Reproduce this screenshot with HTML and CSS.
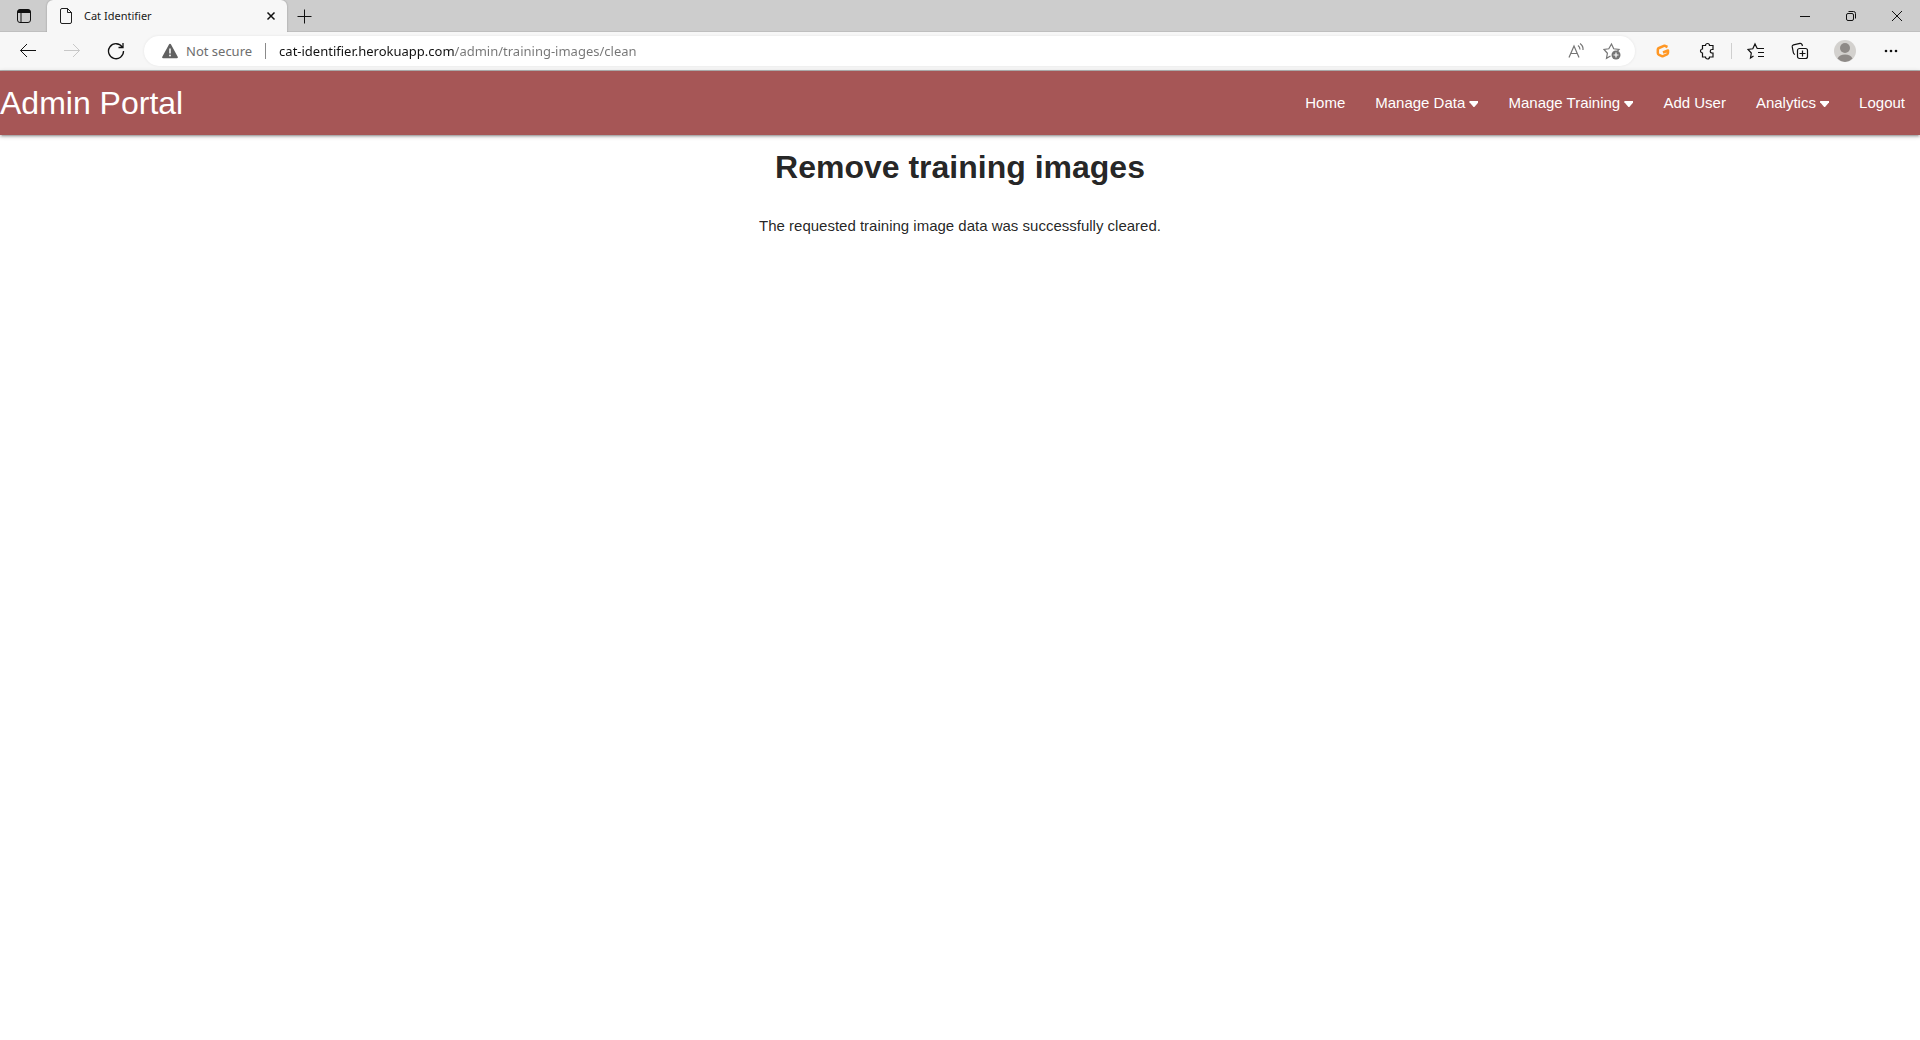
FILE: index.html
```html
<!DOCTYPE html>
<html lang="en">
<head>
<meta charset="utf-8">
<meta name="viewport" content="width=device-width, initial-scale=1">
<title>Cat Identifier</title>
<link rel="stylesheet" href="styles.css">
</head>
<body>
<div class="browser">
  <div class="tabstrip">
    <button class="tab-actions" aria-label="Tab actions">
      <svg width="16" height="16" viewBox="0 0 16 16"><rect x="1.5" y="1.5" width="13" height="13" rx="2.5" class="line"/><path d="M1.5 5V3.500a2 2 0 0 1 2-2h9a2 2 0 0 1 2 2V5z" class="solid"/><path d="M5 5v9.500" class="line"/></svg>
    </button>
    <div class="tab">
      <svg width="14" height="18" viewBox="0 0 14 18"><path d="M3 1.500h5.500l4 4V15a1.500 1.500 0 0 1-1.500 1.500H3A1.500 1.500 0 0 1 1.500 15V3A1.500 1.500 0 0 1 3 1.500zM8.500 1.500V5.500h4" class="line"/></svg>
      <span class="tab-title">Cat Identifier</span>
      <button class="tab-close" aria-label="Close tab"><svg width="10" height="10" viewBox="0 0 10 10"><path d="M1.500 1.500l7 7M8.500 1.500l-7 7" class="line bold"/></svg></button>
    </div>
    <button class="new-tab" aria-label="New tab"><svg width="16" height="16" viewBox="0 0 16 16"><path d="M8.500 1.500v14M1.500 8.500h14" class="line"/></svg></button>
    <div class="window-controls">
      <button class="window-button" aria-label="Minimize"><svg width="12" height="12" viewBox="0 0 12 12"><path d="M1 6.500h10" class="line"/></svg></button>
      <button class="window-button" aria-label="Restore"><svg width="12" height="12" viewBox="0 0 12 12"><rect x="1.500" y="3.500" width="7" height="7" rx="1.500" class="line"/><path d="M3.500 1.500h5a2 2 0 0 1 2 2v5" class="line"/></svg></button>
      <button class="window-button" aria-label="Close"><svg width="12" height="12" viewBox="0 0 12 12"><path d="M1 1l10 10M11 1L1 11" class="line"/></svg></button>
    </div>
  </div>
  <div class="toolbar">
    <button class="tool" aria-label="Back"><svg width="18" height="16" viewBox="0 0 18 16"><path d="M8 1L1.500 7.500 8 14M1.500 7.500H17" class="line"/></svg></button>
    <button class="tool" aria-label="Forward" disabled><svg width="18" height="16" viewBox="0 0 18 16"><path d="M10 1l6.500 6.500L10 14M16.500 7.500H1" class="line"/></svg></button>
    <button class="tool" aria-label="Refresh"><svg width="18" height="18" viewBox="0 0 18 18"><path d="M15.200 5A7.500 7.500 0 1 0 16.500 9M16 1v4.500h-4.500" class="line refresh"/></svg></button>
    <div class="address">
      <svg width="16" height="16" viewBox="0 0 16 16"><path d="M8 .8a1 1 0 0 1 .9.500l6.800 12.500a1 1 0 0 1-.9 1.400H1.200a1 1 0 0 1-.9-1.400L7.100 1.300A1 1 0 0 1 8 .8z" fill="#616161"/><path d="M8 5.500v5" stroke="#fff" stroke-width="1.500"/><circle cx="8" cy="12.500" r=".9" fill="#fff"/></svg>
      <label class="security" for="url">Not secure</label>
      <span class="divider"></span>
      <input class="url" id="url" type="text" value="cat-identifier.herokuapp.com/admin/training-images/clean" spellcheck="false">
      <button class="address-tool" aria-label="Read aloud"><svg width="18" height="18" viewBox="0 0 18 18"><path d="M2 15.500L7 4l5 11.500M3.700 11.500h6.600M11 3.500q2 1.500 2 4M13 1.500q3.500 2.500 3 6.500" class="line aloud"/></svg></button>
      <button class="address-tool" aria-label="Add to favorites"><svg width="18" height="18" viewBox="0 0 18 18"><path d="M7.500 14l-4 2.300.9-5L1 7.500l4.800-.7L8.500 2l2.200 4.800 5.300.7-1.500 1.500" class="line aloud"/><circle cx="13" cy="13" r="4.500" class="solid"/><path d="M10.500 13h5M13 10.500v5" stroke="#fff" stroke-width="1.200"/></svg></button>
    </div>
    <button class="tool" aria-label="Extension"><svg width="14" height="14" viewBox="0 0 14 14"><path d="M11.500 3L8.500 1.700 3 4Q1.800 4.500 1.800 5.500v3.500q0 1.300 1.200 1.800L6.500 12.300 11 10.300Q12 9.800 12 8.800V6.500L7 8.500" fill="none" stroke="#ff9724" stroke-width="2.500" stroke-linejoin="round"/></svg></button>
    <button class="tool" aria-label="Extensions"><svg width="18" height="18" viewBox="0 0 18 18"><path d="M4.500 3.500h3a2 2 0 0 1 4 0h3.500v4h-1a1.700 1.700 0 0 0 0 3.500h1v4h-3.500a2 2 0 0 1-4 0h-3v-4a2 2 0 0 1 0-4z" class="line aloud"/></svg></button>
    <span class="tool-divider"></span>
    <button class="tool" aria-label="Favorites"><svg width="18" height="18" viewBox="0 0 18 18"><path d="M6.500 14l-3 2 .8-5L1 7.500l4.800-.7L8 2l2.200 4.500M10 6.500h7M11 10.500h6M11 14.500h6" class="line aloud"/></svg></button>
    <button class="tool" aria-label="Collections"><svg width="18" height="18" viewBox="0 0 18 18"><path d="M4 12.500Q2.500 12 2.300 10.500L1.200 4.700Q1 3.200 2.500 2.800L9 1.300q1.500-.2 2 1.200l.5 1.500" class="line aloud"/><rect x="6.500" y="6.500" width="10" height="10" rx="2" class="line aloud"/><path d="M11.500 8.500v6M8.500 11.500h6" class="line aloud"/></svg></button>
    <button class="tool wide" aria-label="Profile"><svg width="22" height="22" viewBox="0 0 22 22"><circle cx="11" cy="11" r="11" fill="#d3d1ce"/><circle cx="11" cy="8" r="5" fill="#8e8a87"/><path d="M3.500 18.500q2-4 7.500-4t7.500 4A11 11 0 0 1 11 22a11 11 0 0 1-7.500-3.500z" fill="#8e8a87"/></svg></button>
    <button class="tool wide" aria-label="Settings and more"><svg width="14" height="4" viewBox="0 0 14 4"><circle cx="2" cy="2" r="1.300" class="solid"/><circle cx="7" cy="2" r="1.300" class="solid"/><circle cx="12" cy="2" r="1.300" class="solid"/></svg></button>
  </div>
</div>
<header class="navbar">
  <a class="brand" href="#">Admin Portal</a>
  <nav class="menu">
    <a class="menu-link" href="#">Home</a>
    <a class="menu-link" href="#">Manage Data <span class="caret"></span></a>
    <a class="menu-link" href="#">Manage Training <span class="caret"></span></a>
    <a class="menu-link" href="#">Add User</a>
    <a class="menu-link" href="#">Analytics <span class="caret"></span></a>
    <a class="menu-link" href="#">Logout</a>
  </nav>
</header>
<main class="content">
  <h1 class="title">Remove training images</h1>
  <p class="message">The requested training image data was successfully cleared.</p>
</main>
</body>
</html>
```
FILE: styles.css
```css
* { box-sizing: border-box; }

body {
  margin: 0;
  background: #fff;
  color: rgba(0, 0, 0, 0.87);
  font-family: "Liberation Sans", Arial, sans-serif;
  font-size: 15px;
}

button {
  display: flex;
  align-items: center;
  justify-content: center;
  padding: 0;
  border: 0;
  background: none;
  color: #111;
}

.line { fill: none; stroke: currentColor; }
.bold { stroke-width: 1.5; }
.refresh { stroke-width: 1.3; }
.aloud { stroke-width: 1.2; }
.solid { fill: currentColor; }

.browser {
  border-bottom: 1px solid #b3b3b3;
  background: #f7f7f7;
  font-family: "Noto Sans", "Open Sans", sans-serif;
}

.tabstrip {
  display: flex;
  align-items: stretch;
  height: 32px;
  background: #cdcdcd;
  box-shadow: inset 0 -1px #bfbfbf;
}

.tab-actions { width: 47px; }

.tab {
  display: flex;
  align-items: center;
  gap: 11px;
  width: 240px;
  padding: 0 6px 0 12px;
  border-radius: 6px 6px 0 0;
  background: #f7f7f7;
  box-shadow: 0 0 2px rgba(0, 0, 0, 0.3);
  clip-path: inset(0 -2px 0 -2px);
}

.tab-title {
  flex: 1;
  padding-bottom: 2px;
  color: #1a1a1a;
  font-size: 11px;
}

.tab-close { width: 20px; height: 20px; }
.new-tab { width: 34px; }

.window-controls {
  display: flex;
  margin-left: auto;
}

.window-button { width: 46px; }

.toolbar {
  display: flex;
  align-items: center;
  height: 38px;
  padding: 0 6px;
}

.tool { width: 44px; height: 30px; }
.wide { width: 46px; }
.tool:disabled { color: #c8c8c8; }

.tool-divider {
  width: 1px;
  height: 16px;
  margin: 0 2px;
  background: #cfcfcf;
}

.address {
  display: flex;
  flex: 1;
  align-items: center;
  height: 30px;
  margin: 0 6px;
  padding: 0 5px 0 18px;
  border-radius: 15px;
  background: #fff;
  box-shadow: 0 0 3px rgba(0, 0, 0, 0.08);
}

.security {
  margin-left: 8px;
  color: #6e6e6e;
  font-size: 13px;
}

.divider {
  width: 1px;
  height: 16px;
  margin: 0 13px;
  background: #8a8a8a;
}

.url {
  flex: 1;
  min-width: 0;
  padding: 0;
  border: 0;
  outline: 0;
  background: linear-gradient(90deg, #111 176px, #757575 176px);
  background-clip: text;
  color: transparent;
  font: 13px "Noto Sans", "Open Sans", sans-serif;
}

.address-tool {
  width: 36px;
  height: 30px;
  color: #757575;
}

.navbar {
  display: flex;
  align-items: center;
  justify-content: space-between;
  height: 64px;
  background: #a65656;
  box-shadow: 0 2px 2px rgba(0, 0, 0, 0.14), 0 3px 1px -2px rgba(0, 0, 0, 0.12), 0 1px 5px rgba(0, 0, 0, 0.2);
}

.brand {
  color: #fff;
  font-size: 32px;
  text-decoration: none;
}

.menu { display: flex; }

.menu-link {
  padding: 0 15px;
  color: #fff;
  line-height: 64px;
  text-decoration: none;
}

.caret {
  display: inline-block;
  width: 9px;
  height: 6px;
  background: #fff;
  vertical-align: 1px;
  clip-path: polygon(0 0, 100% 0, 100% 20%, 55% 100%, 45% 100%, 0 20%);
}

.content { text-align: center; }

.title {
  margin: 12px 0 0;
  font-size: 32px;
  line-height: 40px;
}

.message {
  margin: 28px 0 0;
  line-height: 22px;
}
```
